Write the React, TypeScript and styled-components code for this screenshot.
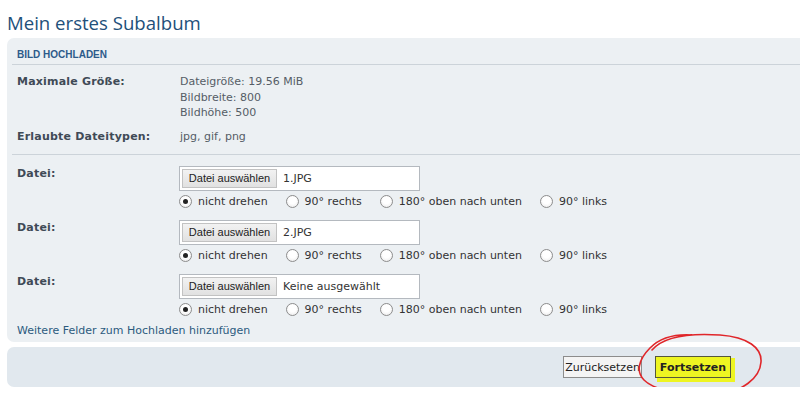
import { Fragment } from "react";
import styled, { createGlobalStyle } from "styled-components";

const GlobalStyle = createGlobalStyle`
  html, body {
    margin: 0;
    padding: 0;
    background: #fff;
  }
  body {
    font-family: "DejaVu Sans", Verdana, sans-serif;
  }
`;

// the original page is wider than the shot; clip it like the screenshot does
const Frame = styled.div`
  width: 100%;
  overflow: hidden;
`;

const Page = styled.div`
  position: relative;
  width: 1280px;
  padding: 0 0 0 7px;
`;

const Title = styled.h2`
  margin: 0 0 2px;
  padding-top: 10px;
  font-family: "Open Sans", "DejaVu Sans", sans-serif;
  font-weight: normal;
  font-size: 18.6px;
  line-height: 26px;
  color: #22507a;
`;

const Panel = styled.div`
  background: #ecf0f3;
  border-radius: 7px;
  padding: 8px 0 4px 5px;
`;

const Heading = styled.h3`
  margin: 0;
  padding-left: 5px;
  font-family: "Liberation Sans", Arial, sans-serif;
  font-size: 10px;
  font-weight: bold;
  line-height: 18px;
  color: #2d5b8a;
  text-transform: uppercase;
  border-bottom: 1px solid #ccd3d9;
`;

const InfoList = styled.div`
  display: grid;
  grid-template-columns: 163px 1fr;
  row-gap: 8px;
  padding: 9px 0 10px 5px;
  border-bottom: 1px solid #ccd3d9;
  font-size: 11px;
  line-height: 15.5px;
`;

const Label = styled.div`
  font-weight: bold;
  color: #3f4a56;
  letter-spacing: 0.2px;
`;

const Value = styled.div`
  color: #555d66;
`;

const UploadList = styled.div`
  display: grid;
  grid-template-columns: 162px 1fr;
  row-gap: 11px;
  padding: 11px 0 0 5px;
  font-size: 11px;
  line-height: 15px;
`;

const FileCell = styled.div`
  display: flex;
  flex-direction: column;
  gap: 2px;
`;

const FileBox = styled.div`
  box-sizing: border-box;
  width: 241px;
  height: 25px;
  display: flex;
  align-items: center;
  gap: 6px;
  padding-left: 2px;
  background: #fff;
  border: 1px solid #b4b9bf;
  color: #333;
`;

const PickButton = styled.span`
  box-sizing: border-box;
  height: 19px;
  width: 95px;
  display: flex;
  align-items: center;
  justify-content: center;
  font-family: "Liberation Sans", Arial, sans-serif;
  font-size: 11px;
  color: #222;
  background: linear-gradient(#f2f2f2, #e1e1e1);
  border: 1px solid #c2c2c2;
`;

const RadioRow = styled.div`
  display: flex;
  align-items: center;
  height: 16px;
  color: #333;
`;

const RadioItem = styled.label`
  display: flex;
  align-items: center;
  gap: 6px;
  margin-right: 18px;
`;

const Radio = styled.input.attrs({ type: "radio" })`
  appearance: none;
  margin: 0;
  width: 13px;
  height: 13px;
  border-radius: 50%;
  border: 1px solid #8d8d8d;
  background: radial-gradient(circle at 50% 40%, #fff 40%, #e6e6e6 100%);
  display: grid;
  place-content: center;
  &:checked::before {
    content: "";
    width: 5px;
    height: 5px;
    border-radius: 50%;
    background: #222;
  }
`;

const MoreLink = styled.a`
  display: block;
  margin: 6px 0 0 5px;
  font-size: 11px;
  line-height: 15px;
  color: #2b5a7e;
  text-decoration: none;
`;

const ButtonBar = styled.div`
  margin-top: 5px;
  background: #e1e8ee;
  border-radius: 7px;
  padding: 9px 0;
  display: flex;
  justify-content: center;
  gap: 13px;
`;

const Button = styled.button<{ $primary?: boolean }>`
  box-sizing: border-box;
  height: 22px;
  width: ${(p) => (p.$primary ? "76px" : "79px")};
  padding: 0;
  font-family: "DejaVu Sans", Verdana, sans-serif;
  font-size: 11px;
  font-weight: ${(p) => (p.$primary ? "bold" : "normal")};
  color: #222;
  background: ${(p) => (p.$primary ? "#eef522" : "#f4f4f4")};
  border: 1px solid ${(p) => (p.$primary ? "#55583a" : "#8c8c8c")};
  box-shadow: ${(p) => (p.$primary ? "3px 3px 0 1px #eef522" : "none")};
`;

const Scribble = styled.svg`
  position: absolute;
  left: 630px;
  top: 326px;
  pointer-events: none;
`;

const ORIENTATIONS = ["nicht drehen", "90° rechts", "180° oben nach unten", "90° links"];
const FILES = ["1.JPG", "2.JPG", "Keine ausgewählt"];

const App = () => {
  return (
    <Frame>
      <GlobalStyle />
      <Page>
        <Title>Mein erstes Subalbum</Title>
        <Panel>
          <Heading>Bild hochladen</Heading>
          <InfoList>
            <Label>Maximale Größe:</Label>
            <Value>
              Dateigröße: 19.56 MiB
              <br />
              Bildbreite: 800
              <br />
              Bildhöhe: 500
            </Value>
            <Label>Erlaubte Dateitypen:</Label>
            <Value>jpg, gif, png</Value>
          </InfoList>
          <UploadList>
            {FILES.map((name, i) => (
              <Fragment key={i}>
                <Label>Datei:</Label>
                <FileCell>
                  <FileBox>
                    <PickButton>Datei auswählen</PickButton>
                    {name}
                  </FileBox>
                  <RadioRow>
                    {ORIENTATIONS.map((o, j) => (
                      <RadioItem key={o}>
                        <Radio name={`rotate${i}`} defaultChecked={j === 0} />
                        {o}
                      </RadioItem>
                    ))}
                  </RadioRow>
                </FileCell>
              </Fragment>
            ))}
          </UploadList>
          <MoreLink href="#">Weitere Felder zum Hochladen hinzufügen</MoreLink>
        </Panel>
        <ButtonBar>
          <Button>Zurücksetzen</Button>
          <Button $primary>Fortsetzen</Button>
        </ButtonBar>
        <Scribble width="145" height="69" viewBox="0 0 145 69">
          <path
            d="M22 24 C34 10 60 7 90 9 C118 11 132 22 131 36 C130 52 112 66 88 68 C60 70 26 66 14 54 C6 46 8 34 20 22 C30 12 46 8 62 9"
            fill="none"
            stroke="#e0262a"
            strokeWidth="1.6"
            strokeLinecap="round"
          />
        </Scribble>
      </Page>
    </Frame>
  );
};

export default App;
